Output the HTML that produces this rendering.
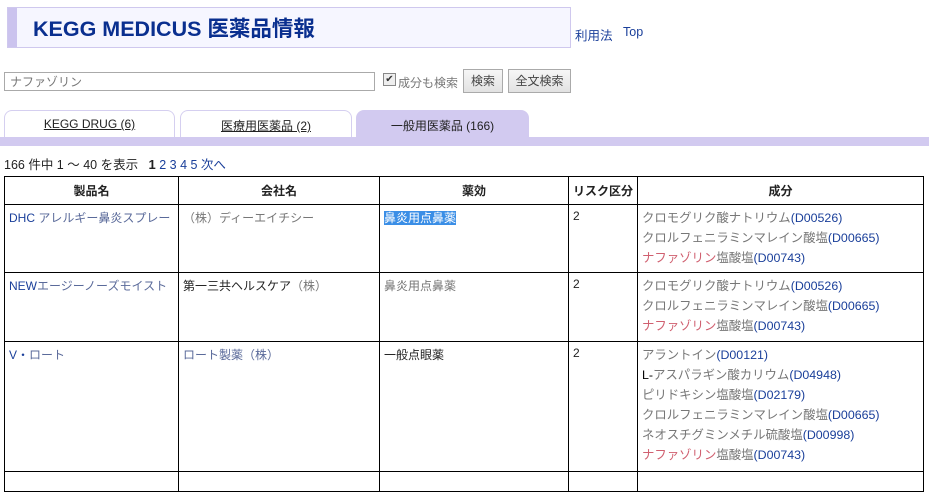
<!DOCTYPE html>
<html><head><meta charset="utf-8"><style>
body{margin:0;width:929px;height:476px;overflow:hidden;background:#fff;font-family:"Liberation Sans","Noto Sans CJK JP",sans-serif;font-size:12px;color:#222;position:relative}
.a{position:absolute}
.hdr{left:7px;top:7px;width:562px;height:39px;background:#f6f6ff;border:1px solid #cfc8ee;}
.hdr .bar{position:absolute;left:0;top:0;width:9px;height:39px;background:#cbc3ee}
.hdr .t{position:absolute;left:25px;top:4px;font-size:21.5px;font-weight:bold;color:#0a2f8f}
.lk{color:#1a3f9a}
.gr{color:#777}
.inp{left:4px;top:72px;height:19px;border:1px solid #aaa;color:#777;font-size:12px;line-height:19px;padding-left:5px;box-sizing:border-box;width:371px}
.btn{height:24px;top:69px;border:1px solid #aaa;background:linear-gradient(#f6f6f6,#e2e2e2);box-sizing:border-box;text-align:center;line-height:22px;color:#444}
.tab{top:110px;height:27px;box-sizing:border-box;border:1px solid #d5cff0;border-bottom:none;border-radius:8px 8px 0 0;background:#fff;text-align:center;line-height:26px;font-size:12px;color:#222}
.tab u{text-decoration:underline}
table{position:absolute;left:4px;top:176px;border-collapse:collapse;table-layout:fixed}
td,th{border:1px solid #000;vertical-align:top;padding:4px 4px;font-size:12px;text-align:left}
th{text-align:center;vertical-align:middle;font-weight:bold;padding:0}
.ing div{line-height:20px;height:20px;color:#777;font-size:12.4px;white-space:nowrap}
.ing{padding-top:3px}
.ing .d{color:#1a3f9a}
.red{color:#d06070}
</style></head><body>
<div class="a hdr"><div class="bar"></div><div class="t">KEGG MEDICUS 医薬品情報</div></div>
<div class="a lk" style="left:575px;top:25px;font-size:12.5px">利用法</div>
<div class="a lk" style="left:623px;top:25px;font-size:12.5px">Top</div>
<div class="a inp">ナファゾリン</div>
<div class="a" style="left:383px;top:73px;width:11px;height:11px;border:1px solid #888;background:#eee;font-size:10px;line-height:11px;text-align:center;color:#333">✔</div>
<div class="a gr" style="left:398px;top:74px">成分も検索</div>
<div class="a btn" style="left:463px;width:40px">検索</div>
<div class="a btn" style="left:508px;width:63px">全文検索</div>
<div class="a tab" style="left:4px;width:171px"><u>KEGG DRUG (6)</u></div>
<div class="a tab" style="left:180px;width:172px;line-height:30px"><u>医療用医薬品 (2)</u></div>
<div class="a tab" style="left:356px;width:173px;background:#d2caf0;border-color:#d2caf0;line-height:30px">一般用医薬品 (166)</div>
<div class="a" style="left:0;top:137px;width:929px;height:9px;background:#d2caf0"></div>
<div class="a" style="left:4px;top:154px;font-size:12.5px">166 件中 1 ～ 40 を表示 &nbsp; <b style="font-size:13px">1</b> <span class="lk">2 3 4 5 次へ</span></div>
<table>
<colgroup><col style="width:174px"><col style="width:201px"><col style="width:189px"><col style="width:69px"><col style="width:286px"></colgroup>
<tr style="height:28px"><th>製品名</th><th>会社名</th><th>薬効</th><th>リスク区分</th><th>成分</th></tr>
<tr style="height:68px"><td class="lk">DHC <span style="color:#5a6a9a">アレルギー鼻炎スプレー</span></td><td class="gr">（株）ディーエイチシー</td><td><span style="background:#3a8ee6;color:#fff">鼻炎用点鼻薬</span></td><td>2</td>
<td class="ing"><div>クロモグリク酸ナトリウム<span class="d">(D00526)</span></div><div>クロルフェニラミンマレイン酸塩<span class="d">(D00665)</span></div><div><span class="red">ナファゾリン</span>塩酸塩<span class="d">(D00743)</span></div></td></tr>
<tr style="height:69px"><td class="lk">NEW<span style="color:#5a6a9a">エージーノーズモイスト</span></td><td>第一三共ヘルスケア<span class="gr">（株）</span></td><td class="gr">鼻炎用点鼻薬</td><td>2</td>
<td class="ing"><div>クロモグリク酸ナトリウム<span class="d">(D00526)</span></div><div>クロルフェニラミンマレイン酸塩<span class="d">(D00665)</span></div><div><span class="red">ナファゾリン</span>塩酸塩<span class="d">(D00743)</span></div></td></tr>
<tr style="height:130px"><td class="lk">V・<span style="color:#5a6a9a">ロート</span></td><td style="color:#5a6a9a">ロート製薬（株）</td><td>一般点眼薬</td><td>2</td>
<td class="ing"><div>アラントイン<span class="d">(D00121)</span></div><div><span style="color:#000">L-</span>アスパラギン酸カリウム<span class="d">(D04948)</span></div><div>ピリドキシン塩酸塩<span class="d">(D02179)</span></div><div>クロルフェニラミンマレイン酸塩<span class="d">(D00665)</span></div><div>ネオスチグミンメチル硫酸塩<span class="d">(D00998)</span></div><div><span class="red">ナファゾリン</span>塩酸塩<span class="d">(D00743)</span></div></td></tr>
<tr style="height:20px"><td></td><td></td><td></td><td></td><td></td></tr>
</table>
</body></html>
